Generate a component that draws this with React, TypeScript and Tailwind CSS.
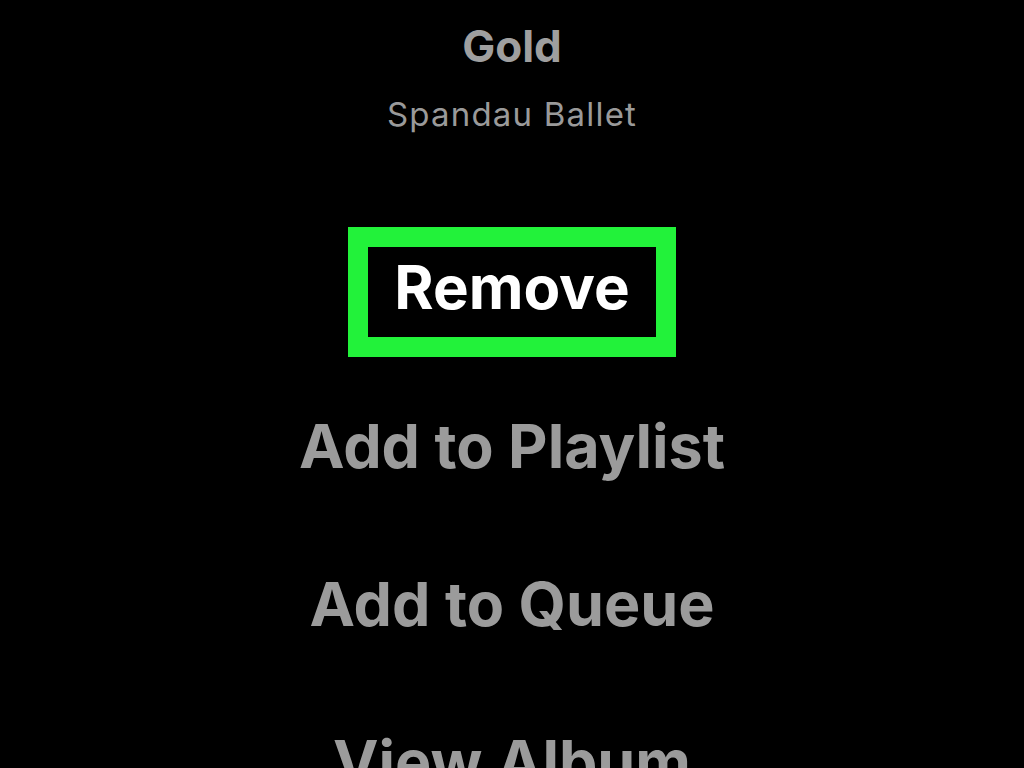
import React from 'react';

const options = ['Add to Playlist', 'Add to Queue', 'View Album'];

const App = () => {
  return (
    <div
      className="w-full h-[768px] overflow-hidden bg-black flex flex-col items-center"
      style={{ fontFamily: 'Inter, "Noto Sans", sans-serif' }}
    >
      <h1 className="shrink-0 mt-[24px] text-[44px] leading-none font-bold text-[#9f9f9f]">Gold</h1>
      <p className="shrink-0 mt-[30px] text-[33px] leading-none tracking-[1.2px] text-[#9a9a9a]">
        Spandau Ballet
      </p>

      <div className="shrink-0 mt-[96px] w-[328px] h-[130px] border-[20px] border-[#22f23a] flex justify-center pt-[10px]">
        <span className="text-[60px] leading-none font-bold text-white">Remove</span>
      </div>

      <div className="shrink-0 mt-[59px] flex flex-col items-center gap-[97px]">
        {options.map((label) => (
          <span key={label} className="shrink-0 text-[61px] leading-none font-bold text-[#9b9b9b]">
            {label}
          </span>
        ))}
      </div>
    </div>
  );
};

export default App;
